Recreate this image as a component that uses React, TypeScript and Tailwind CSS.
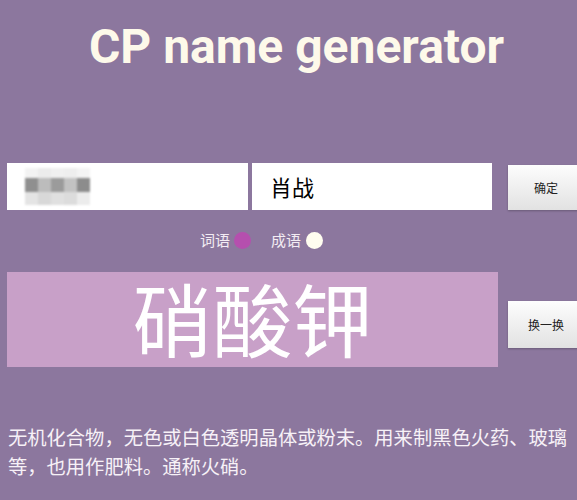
import React from "react";

const cjk = { fontFamily: '"Noto Sans CJK SC", "Noto Sans", sans-serif' };

function Mosaic() {
  const top = ["#f3f3f3", "#ececec", "#f0f0f0", "#eeeeee", "#f4f4f4"];
  const mid = ["#8f8f8f", "#bcbcbc", "#9b9b9b", "#c2c2c2", "#8c8c8c"];
  const bot = ["#e4e4e4", "#d8d8d8", "#e0e0e0", "#dcdcdc", "#ececec"];
  return (
    <div className="flex flex-col blur-[1px]">
      <div className="flex">
        {top.map((c, i) => (
          <div key={i} className="w-[13px] h-[10px]" style={{ background: c }} />
        ))}
      </div>
      <div className="flex">
        {mid.map((c, i) => (
          <div key={i} className="w-[13px] h-[14px]" style={{ background: c }} />
        ))}
      </div>
      <div className="flex">
        {bot.map((c, i) => (
          <div key={i} className="w-[13px] h-[13px]" style={{ background: c }} />
        ))}
      </div>
    </div>
  );
}

export default function App() {
  return (
    <div className="w-[577px] h-[500px] overflow-hidden bg-[#8c779e]">
      <h1
        className="pt-[23px] text-center text-[48px] leading-[48px] font-bold text-[#fdf9ea] pl-[16px]"
        style={{ fontFamily: "Roboto, sans-serif" }}
      >
        CP name generator
      </h1>

      <div className="mt-[92px] flex items-start pl-[7px] w-[600px]">
        <div className="w-[241px] h-[47px] bg-white flex items-center pl-[18px]">
          <Mosaic />
        </div>
        <div
          className="ml-[4px] w-[240px] h-[47px] bg-white flex items-center pl-[18px] text-[22px] text-black"
          style={cjk}
        >
          肖战
        </div>
        <button
          className="ml-[16px] mt-[2px] w-[76px] h-[45px] shrink-0 bg-gradient-to-b from-[#fdfdfd] to-[#e2e2e2] text-[12px] text-[#222] shadow-[0_1px_2px_rgba(0,0,0,0.25)]"
          style={cjk}
        >
          确定
        </button>
      </div>

      <div className="mt-[20px] h-[20px] flex items-center pl-[200px] text-[15px] text-[#f3ecf3]" style={cjk}>
        <span>词语</span>
        <span className="ml-[4px] w-[17px] h-[17px] rounded-full bg-[#b54fae]" />
        <span className="ml-[20px]">成语</span>
        <span className="ml-[5px] w-[17px] h-[17px] rounded-full bg-[#fffdf0]" />
      </div>

      <div className="mt-[22px] flex items-start pl-[7px] w-[600px]">
        <div
          className="w-[491px] h-[95px] bg-[#c8a0c8] flex items-center justify-center pb-[8px] text-[80px] leading-none font-normal text-white"
          style={cjk}
        >
          硝酸钾
        </div>
        <button
          className="ml-[10px] mt-[29px] w-[76px] h-[47px] shrink-0 bg-gradient-to-b from-[#fdfdfd] to-[#e2e2e2] text-[12px] text-[#222] shadow-[0_1px_2px_rgba(0,0,0,0.25)]"
          style={cjk}
        >
          换一换
        </button>
      </div>

      <p
        className="mt-[56px] pl-[8px] w-[572px] text-[19.3px] leading-[29px] text-[#f7f1f7]"
        style={cjk}
      >
        无机化合物，无色或白色透明晶体或粉末。用来制黑色火药、玻璃等，也用作肥料。通称火硝。
      </p>
    </div>
  );
}
